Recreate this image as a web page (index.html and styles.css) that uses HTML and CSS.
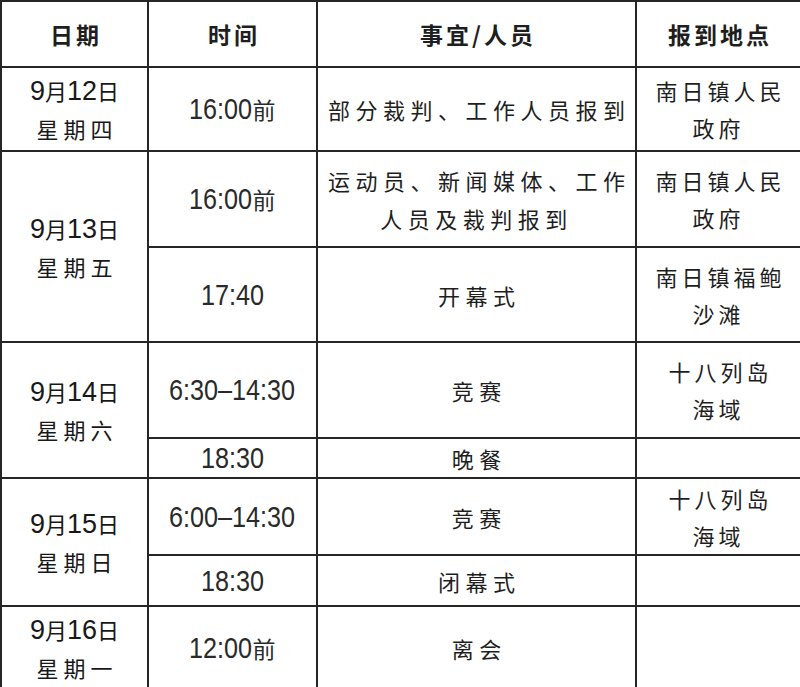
FILE: index.html
```html
<!DOCTYPE html>
<html lang="zh-CN">
<head>
<meta charset="utf-8">
<title>赛事日程</title>
<link rel="stylesheet" href="styles.css">
</head>
<body>
<table class="schedule">
  <colgroup>
    <col class="c-date">
    <col class="c-time">
    <col class="c-item">
    <col class="c-place">
  </colgroup>
  <thead>
    <tr class="r-head">
      <th>日期</th>
      <th>时间</th>
      <th>事宜/人员</th>
      <th>报到地点</th>
    </tr>
  </thead>
  <tbody>
    <tr class="r1">
      <td class="date"><span class="n">9</span>月<span class="n">12</span>日<br><span class="w">星期四</span></td>
      <td class="time"><span class="num pre">16:00</span>前</td>
      <td class="item">部分裁判、工作人员报到</td>
      <td class="place">南日镇人民<br>政府</td>
    </tr>
    <tr class="r2a">
      <td class="date" rowspan="2"><span class="n">9</span>月<span class="n">13</span>日<br><span class="w">星期五</span></td>
      <td class="time"><span class="num pre">16:00</span>前</td>
      <td class="item">运动员、新闻媒体、工作<br>人员及裁判报到</td>
      <td class="place">南日镇人民<br>政府</td>
    </tr>
    <tr class="r2b">
      <td class="time"><span class="num">17:40</span></td>
      <td class="item">开幕式</td>
      <td class="place">南日镇福鲍<br>沙滩</td>
    </tr>
    <tr class="r3a">
      <td class="date" rowspan="2"><span class="n">9</span>月<span class="n">14</span>日<br><span class="w">星期六</span></td>
      <td class="time"><span class="num">6:30–14:30</span></td>
      <td class="item">竞赛</td>
      <td class="place">十八列岛<br>海域</td>
    </tr>
    <tr class="r3b">
      <td class="time"><span class="num">18:30</span></td>
      <td class="item">晚餐</td>
      <td class="place"></td>
    </tr>
    <tr class="r4a">
      <td class="date" rowspan="2"><span class="n">9</span>月<span class="n">15</span>日<br><span class="w">星期日</span></td>
      <td class="time"><span class="num">6:00–14:30</span></td>
      <td class="item">竞赛</td>
      <td class="place">十八列岛<br>海域</td>
    </tr>
    <tr class="r4b">
      <td class="time"><span class="num">18:30</span></td>
      <td class="item">闭幕式</td>
      <td class="place"></td>
    </tr>
    <tr class="r5">
      <td class="date"><span class="n">9</span>月<span class="n">16</span>日<br><span class="w">星期一</span></td>
      <td class="time"><span class="num pre">12:00</span>前</td>
      <td class="item">离会</td>
      <td class="place"></td>
    </tr>
  </tbody>
</table>
</body>
</html>
```

FILE: styles.css
```css
html, body {
  margin: 0;
  padding: 0;
  background: #ffffff;
}

.schedule {
  border-collapse: collapse;
  table-layout: fixed;
  width: 800px;
  color: #1e1e1e;
  font-family: "Noto Sans CJK SC", sans-serif;
}

.c-date { width: 147px; }
.c-time { width: 169px; }
.c-item { width: 319px; }
.c-place { width: 165px; }

.schedule th,
.schedule td {
  border: 2px solid #262626;
  padding: 0;
  text-align: center;
  vertical-align: middle;
}

.schedule th {
  font-family: "Noto Sans CJK SC", sans-serif;
  font-weight: 700;
  font-size: 23px;
  letter-spacing: 3px;
  text-indent: 3px;
}

.r-head { height: 66px; }
.r1 { height: 84px; }
.r2a { height: 96px; }
.r2b { height: 95px; }
.r3a { height: 96px; }
.r3b { height: 38px; }
.r4a { height: 77px; }
.r4b { height: 51px; }
.r5 { height: 83px; }

.date {
  font-family: "Noto Sans CJK SC", sans-serif;
  font-size: 22px;
  line-height: 38px;
  color: #181818;
}

.date .n {
  font-family: "Liberation Sans", sans-serif;
  font-size: 27px;
  line-height: 1;
}

.date .w {
  letter-spacing: 5px;
  margin-left: 5px;
}

.time {
  font-family: "Noto Sans CJK SC", sans-serif;
  font-size: 23px;
  color: #2a2a2a;
}

.time .num {
  display: inline-block;
  font-family: "Liberation Sans", sans-serif;
  font-size: 30px;
  line-height: 1;
  transform: scaleX(0.84);
  transform-origin: center center;
}

.time .num.pre {
  transform-origin: left center;
  margin-right: -12px;
}

.item {
  font-family: "Noto Sans CJK SC", sans-serif;
  font-size: 22px;
  letter-spacing: 5.5px;
  text-indent: 5.5px;
  line-height: 38px;
}

.place {
  font-family: "Noto Sans CJK SC", sans-serif;
  font-size: 22px;
  letter-spacing: 4px;
  text-indent: 4px;
  line-height: 37px;
}
```
